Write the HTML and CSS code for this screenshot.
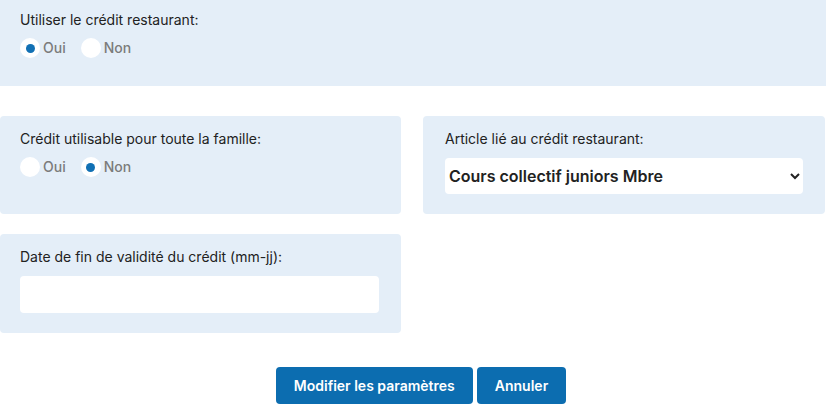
FILE: index.html
```html
<!DOCTYPE html>
<html lang="fr">
<head>
    <meta charset="UTF-8">
    <meta name="viewport" content="width=device-width, initial-scale=1.0">
    <title>Crédit restaurant</title>
    <link rel="stylesheet" href="styles.css">
</head>
<body>
    <form class="settings" action="" name="credit">
        <div class="panel panel-top">
            <div class="label">Utiliser le crédit restaurant:</div>
            <div class="radios">
                <label class="radio"><input type="radio" name="use" checked> Oui</label>
                <label class="radio"><input type="radio" name="use"> Non</label>
            </div>
        </div>

        <div class="grid">
            <div class="panel">
                <div class="label">Crédit utilisable pour toute la famille:</div>
                <div class="radios">
                    <label class="radio"><input type="radio" name="family"> Oui</label>
                    <label class="radio"><input type="radio" name="family" checked> Non</label>
                </div>
            </div>

            <div class="panel panel-right">
                <div class="label">Article lié au crédit restaurant:</div>
                <select class="field select">
                    <option>Cours collectif juniors Mbre</option>
                </select>
            </div>

            <div class="panel panel-date">
                <div class="label">Date de fin de validité du crédit (mm-jj):</div>
                <input type="text" class="field">
            </div>
        </div>

        <div class="actions">
            <button type="button" class="btn">Modifier les paramètres</button>
            <button type="button" class="btn">Annuler</button>
        </div>
    </form>
</body>
</html>
```

FILE: styles.css
```css
body{
    margin: 0;
    font-family: Inter, "Noto Sans", sans-serif;
    font-size: 14px;
    color: #222;
    background: #fff;
}

.settings{
    width: 825px;
}

.panel{
    background-color: #e4eef8;
    border-radius: 4px;
    padding: 14px 22px 0 20px;
    box-sizing: border-box;
    height: 98px;
}

.panel-top{
    width: 826px;
    height: 86px;
    padding-top: 11px;
    border-radius: 0;
}

.panel-right{
    padding-left: 22px;
}

.panel-date{
    height: 99px;
}

.label{
    line-height: 18px;
}

.radios{
    display: flex;
    gap: 15px;
    margin-top: 9px;
}

.radio{
    display: flex;
    align-items: center;
    gap: 3px;
    color: #7b7b7b;
    font-weight: 500;
    line-height: 20px;
}

.radio input{
    appearance: none;
    margin: 0;
    width: 20px;
    height: 20px;
    border-radius: 50%;
    background: #fff;
    display: grid;
    place-content: center;
}

.radio input:checked::before{
    content: "";
    width: 9px;
    height: 9px;
    border-radius: 50%;
    background: #1170b4;
}

.grid{
    display: grid;
    grid-template-columns: 401px 402px;
    column-gap: 22px;
    row-gap: 20px;
    margin-top: 30px;
}

.field{
    display: block;
    width: 100%;
    height: 37px;
    margin-top: 10px;
    border: none;
    border-radius: 4px;
    background: #fff;
    box-sizing: border-box;
    font-family: inherit;
}

.select{
    height: 36px;
    padding: 0;
    font-size: 16px;
    font-weight: 600;
    color: #222;
}

.actions{
    display: flex;
    justify-content: center;
    gap: 4px;
    margin-top: 34px;
    padding-left: 17px;
}

.btn{
    cursor: pointer;
    height: 37px;
    padding: 0 18px;
    border: none;
    border-radius: 4px;
    background-color: #0c6db0;
    color: #fff;
    font-family: inherit;
    font-size: 14px;
    font-weight: 600;
}
```
